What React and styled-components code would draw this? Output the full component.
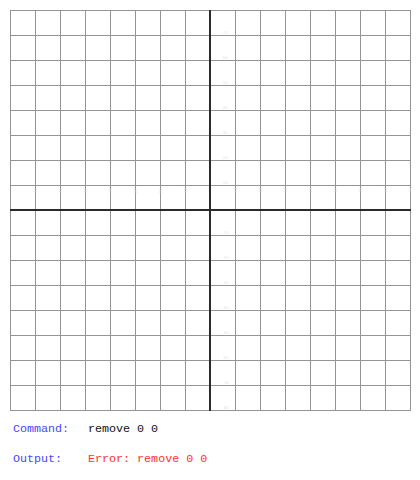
import React from 'react'
import styled, { createGlobalStyle } from 'styled-components'

const GlobalStyle = createGlobalStyle`
  html, body {
    margin: 0;
    padding: 0;
    background: #ffffff;
  }
`

const CELL = 25
const COUNT = 16
const SIZE = CELL * COUNT

const Graph = () => {
  const lines = []
  for (let i = 0; i <= COUNT; i++) {
    const p = i * CELL + 0.5
    lines.push(<line key={'v' + i} x1={p} y1={0} x2={p} y2={SIZE + 1} />)
    lines.push(<line key={'h' + i} x1={0} y1={p} x2={SIZE + 1} y2={p} />)
  }
  // faint tick labels next to the axes
  const ticks = []
  for (let i = 1; i <= COUNT; i++) {
    const v = i - COUNT / 2
    if (v === 0) continue
    const p = i * CELL
    ticks.push(
      <text key={'ty' + i} x={213} y={p - 1} fontSize="3">
        {-v}.0
      </text>
    )
    ticks.push(
      <text key={'tx' + i} x={p - 1} y={178} fontSize="3" transform={`rotate(90 ${p - 1} 178)`}>
        {v}.0
      </text>
    )
  }
  return (
    <Plot width={SIZE + 1} height={SIZE + 1} viewBox={`0 0 ${SIZE + 1} ${SIZE + 1}`}>
      <g stroke="#949494" strokeWidth="1">{lines}</g>
      <g fill="#d8d8d8" fontFamily="Liberation Sans, sans-serif">{ticks}</g>
      <g stroke="#2b2b2b" strokeWidth="2">
        <line x1={SIZE / 2} y1={0} x2={SIZE / 2} y2={SIZE + 1} />
        <line x1={0} y1={SIZE / 2} x2={SIZE + 1} y2={SIZE / 2} />
      </g>
    </Plot>
  )
}

const App = () => {
  return (
    <Wrapper>
      <GlobalStyle />
      <Graph />
      <Console>
        <Row>
          <Label>Command:</Label>
          <Value>remove 0 0</Value>
        </Row>
        <Row>
          <Label>Output:</Label>
          <Value error>Error: remove 0 0</Value>
        </Row>
      </Console>
    </Wrapper>
  )
}

const Wrapper = styled.div`
  padding: 10px 0 0 10px;
  width: 420px;
  box-sizing: border-box;
`

const Plot = styled.svg`
  display: block;
`

const Console = styled.div`
  display: flex;
  flex-direction: column;
  gap: 16px;
  padding: 11px 0 0 3px;
  font-family: "Liberation Mono", "Courier New", monospace;
  font-size: 11.7px;
`

const Row = styled.div`
  display: flex;
  height: 14px;
  line-height: 14px;
  white-space: pre;
`

const Label = styled.span`
  width: 75px;
  color: #4646ff;
`

const Value = styled.span`
  color: ${(p) => (p.error ? '#ff3030' : '#111111')};
`

export default App
